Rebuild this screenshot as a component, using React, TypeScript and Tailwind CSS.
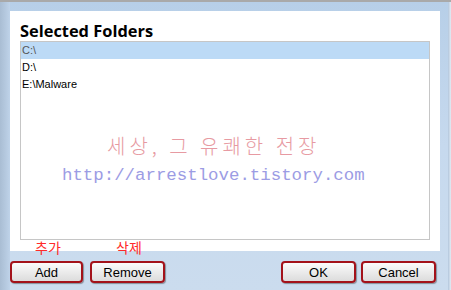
import React from 'react';

const folders = ['C:\\', 'D:\\', 'E:\\Malware'];

function DlgButton({ label, className }: { label: string; className?: string }) {
  return (
    <button
      className={`h-[22px] rounded-[4px] border-2 border-[#a3121a] bg-gradient-to-b from-[#fbfbfb] to-[#dcdcdc] text-[13px] leading-none text-black shadow-[1px_1px_1px_rgba(0,0,0,0.35)] font-['Liberation_Sans',Arial,sans-serif] ${className ?? ''}`}
    >
      {label}
    </button>
  );
}

export default function App() {
  return (
    <div className="relative flex h-[290px] w-[451px] flex-col border-t-2 border-[#a9a9a9] bg-gradient-to-b from-[#b7cfe8] via-[#c6d9ee] to-[#cbdcee] pl-[10px] pt-[9px]">
      {/* window edges */}
      <div className="absolute left-0 top-0 h-full w-[10px] bg-gradient-to-r from-[#a9bdd3] to-[#bfd3e9]" />
      <div className="absolute right-0 top-0 h-full w-[3px] bg-gradient-to-r from-[#b2c6dc] to-[#e4ecf4]" />

      <div className="relative flex h-[240px] w-[430px] flex-col bg-white pl-[10px]">
        <div className="flex h-[30px] items-end font-['Open_Sans',sans-serif] text-[16.4px] font-bold leading-none text-black">
          <span className="pb-[2px]">Selected Folders</span>
        </div>
        <div className="relative h-[199px] w-[410px] border border-[#c6c6c6] font-['Liberation_Sans',Arial,sans-serif] text-[11px]">
          {folders.map((f, i) => (
            <div
              key={f}
              className={`flex h-[17px] items-center pl-[1px] ${i === 0 ? 'bg-[#bcdaf6] text-[#555]' : 'text-black'}`}
            >
              {f}
            </div>
          ))}

          {/* watermark */}
          <div className="absolute left-[86px] top-[89px] font-['Noto_Sans_CJK_KR',sans-serif] text-[20px] font-light tracking-[4px] text-[#e79aa2]">
            세상, 그 유쾌한 전장
          </div>
          <div className="absolute left-[41px] top-[121px] font-['Liberation_Mono',monospace] text-[17.4px] text-[#9c9ce4]">
            http://arrestlove.tistory.com
          </div>
        </div>
      </div>

      {/* red hints over the buttons */}
      <div className="absolute left-[35px] top-[235px] font-['Noto_Sans_CJK_KR',sans-serif] text-[14px] text-[#ff2a2a]">추가</div>
      <div className="absolute left-[116px] top-[235px] font-['Noto_Sans_CJK_KR',sans-serif] text-[14px] text-[#ff2a2a]">삭제</div>

      <div className="mt-[10px] flex w-[426px] items-center">
        <DlgButton label="Add" className="w-[73px]" />
        <DlgButton label="Remove" className="ml-[7px] w-[75px]" />
        <DlgButton label="OK" className="ml-auto w-[75px]" />
        <DlgButton label="Cancel" className="ml-[5px] w-[75px]" />
      </div>
    </div>
  );
}
